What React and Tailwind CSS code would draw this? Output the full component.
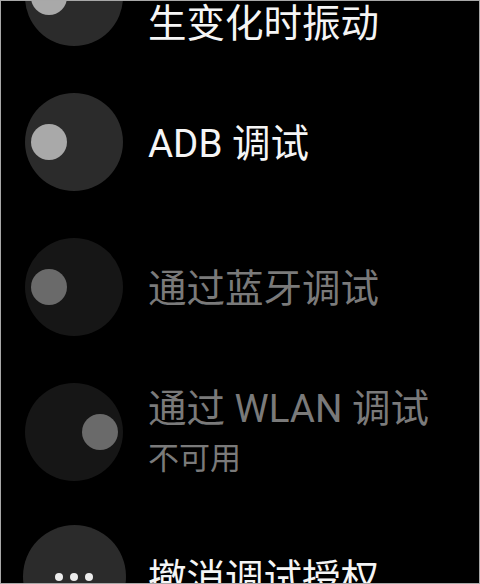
const rows = [
  { lines: ['在连接状态发', '生变化时振动'], on: true, knob: 'left' },
  { lines: ['ADB 调试'], on: true, knob: 'left' },
  { lines: ['通过蓝牙调试'], on: false, knob: 'left' },
  { lines: ['通过 WLAN 调试'], sub: '不可用', on: false, knob: 'right' },
];

function Toggle({ on, knob }) {
  return (
    <div className={`relative w-[98px] h-[98px] rounded-full shrink-0 ${on ? 'bg-[#2b2b2b]' : 'bg-[#161616]'}`}>
      <div
        className={`absolute top-[31px] w-[36px] h-[36px] rounded-full ${on ? 'bg-[#a9a9a9]' : 'bg-[#6a6a6a]'} ${knob === 'left' ? 'left-[6px]' : 'left-[57px]'}`}
      />
    </div>
  );
}

export default function App() {
  return (
    <div
      className="w-[480px] h-[584px] overflow-hidden bg-black border border-[#a8a8a8]"
      style={{ fontFamily: 'Roboto, "Noto Sans CJK SC", sans-serif' }}
    >
      <div className="flex flex-col -mt-[77px]">
        {rows.map((row, i) => (
          <div key={i} className="h-[145px] flex items-center gap-[25px] pl-[24px] shrink-0">
            <Toggle on={row.on} knob={row.knob} />
            <div className={`pt-[4px] ${row.on ? 'text-[#f5f5f5]' : 'text-[#7a7a7a]'}`}>
              {row.lines.map((l) => (
                <div key={l} className="text-[38.5px] leading-[50px] whitespace-nowrap">{l}</div>
              ))}
              {row.sub && <div className="text-[31px] leading-[50px]">{row.sub}</div>}
            </div>
          </div>
        ))}
        <div className="h-[145px] flex items-center gap-[25px] pl-[24px] shrink-0">
          <div className="w-[98px] flex justify-center shrink-0">
            <div className="w-[103px] h-[103px] rounded-full bg-[#2b2b2b] shrink-0 flex items-center justify-center gap-[7px]">
              <span className="w-[8px] h-[8px] rounded-full bg-[#ececec]" />
              <span className="w-[8px] h-[8px] rounded-full bg-[#ececec]" />
              <span className="w-[8px] h-[8px] rounded-full bg-[#ececec]" />
            </div>
          </div>
          <div className="pt-[4px] text-[38.5px] leading-[50px] text-[#f5f5f5] whitespace-nowrap">撤消调试授权</div>
        </div>
      </div>
    </div>
  );
}
